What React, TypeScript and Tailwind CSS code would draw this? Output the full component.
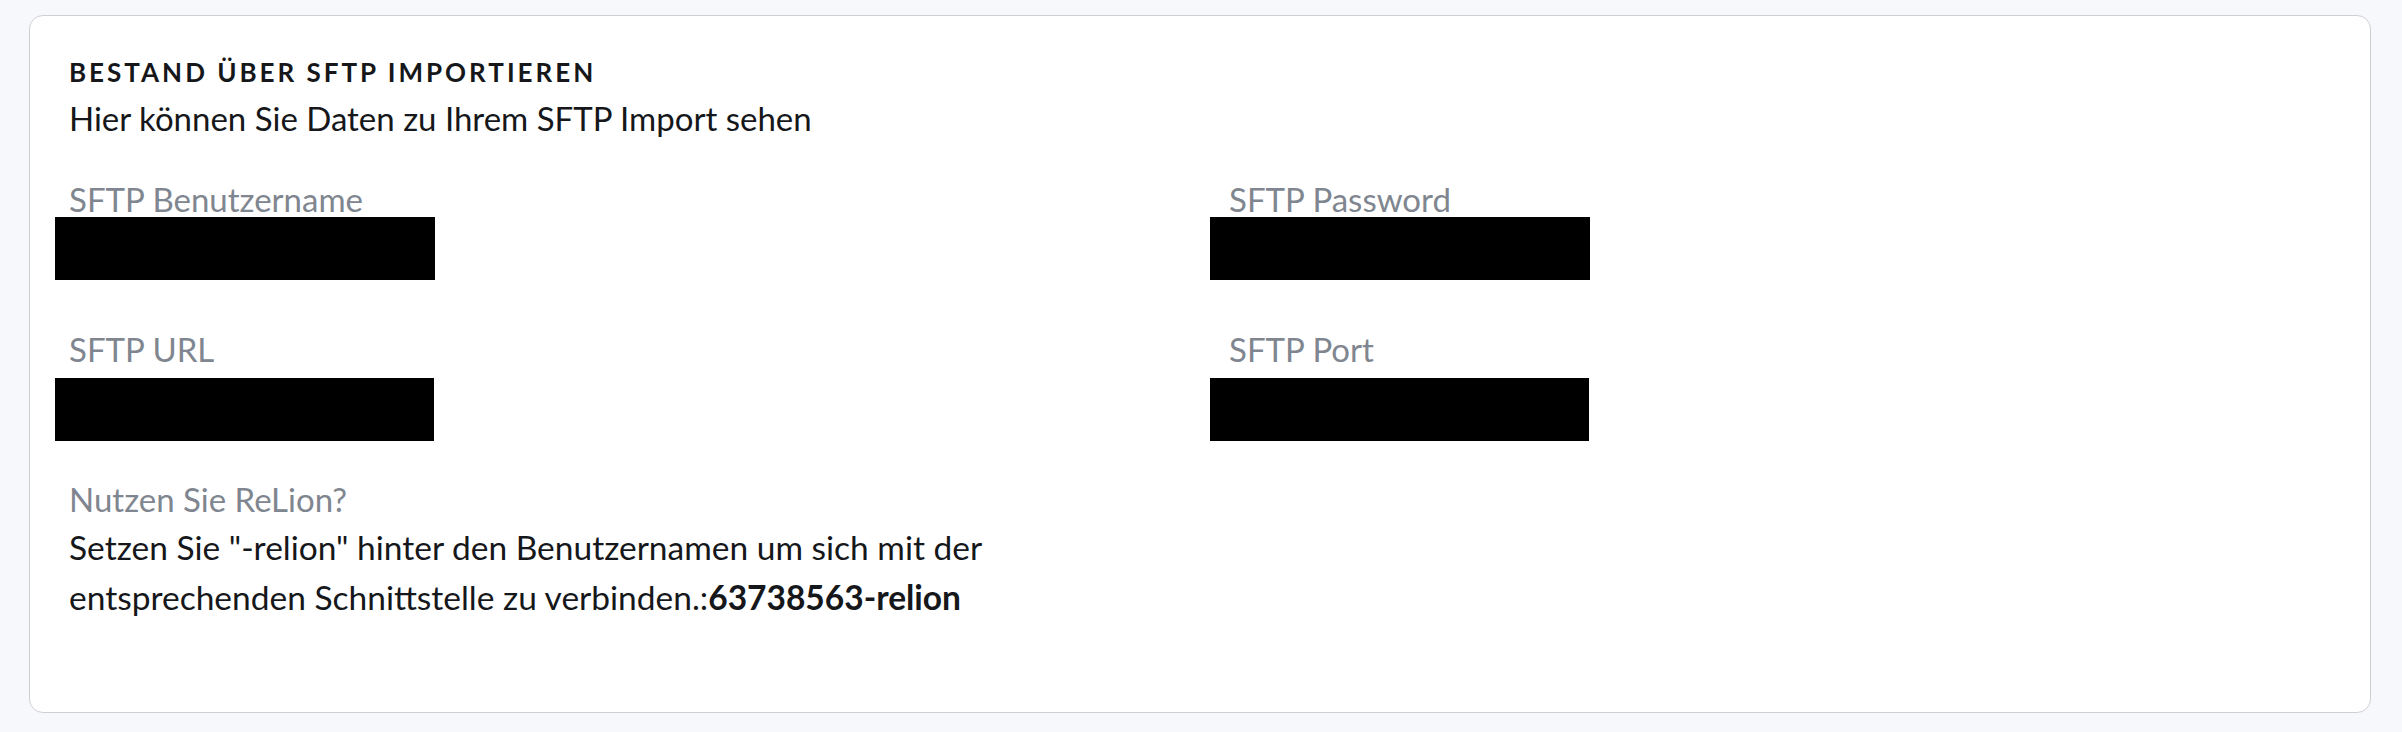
const labelClass = 'text-[33px] leading-[36px] text-[#80868f]'

function Redacted({ className }: { className: string }) {
  return <div className={`h-[63px] bg-black ${className}`} />
}

function Field({
  label,
  boxClass,
}: {
  label: string
  boxClass: string
}) {
  return (
    <div className="h-[150px]">
      <div className={labelClass}>{label}</div>
      <Redacted className={boxClass} />
    </div>
  )
}

export default function App() {
  return (
    <div
      className="min-h-screen bg-[#f7f8fc] pt-[15px] pb-[19px]"
      style={{ fontFamily: 'Lato, "Open Sans", sans-serif' }}
    >
      <section className="ml-[29px] mr-[31px] h-[698px] rounded-[14px] border border-[#d0d0d3] bg-white px-[39px] pt-[38px]">
        <h1 className="text-[26px] font-bold uppercase leading-[36px] tracking-[0.115em] text-[#15171a]">
          Bestand über SFTP importieren
        </h1>
        <p className="mt-[4px] text-[33px] leading-[48px] text-[#15171a]">
          Hier können Sie Daten zu Ihrem SFTP Import sehen
        </p>

        <div className="mt-[39px] grid grid-cols-[1160px_1fr]">
          <Field label="SFTP Benutzername" boxClass="-ml-[14px] w-[380px]" />
          <Field label="SFTP Password" boxClass="-ml-[19px] w-[380px]" />
          <Field label="SFTP URL" boxClass="-ml-[14px] mt-[11px] w-[379px]" />
          <Field label="SFTP Port" boxClass="-ml-[19px] mt-[11px] w-[379px]" />
        </div>

        <div className={labelClass}>Nutzen Sie ReLion?</div>
        <p className="mt-[5px] max-w-[1000px] text-[33.5px] leading-[50px] text-[#15171a]">
          Setzen Sie "-relion" hinter den Benutzernamen um sich mit der{' '}
          <br />
          entsprechenden Schnittstelle zu verbinden.:
          <strong className="font-bold">63738563-relion</strong>
        </p>
      </section>
    </div>
  )
}
